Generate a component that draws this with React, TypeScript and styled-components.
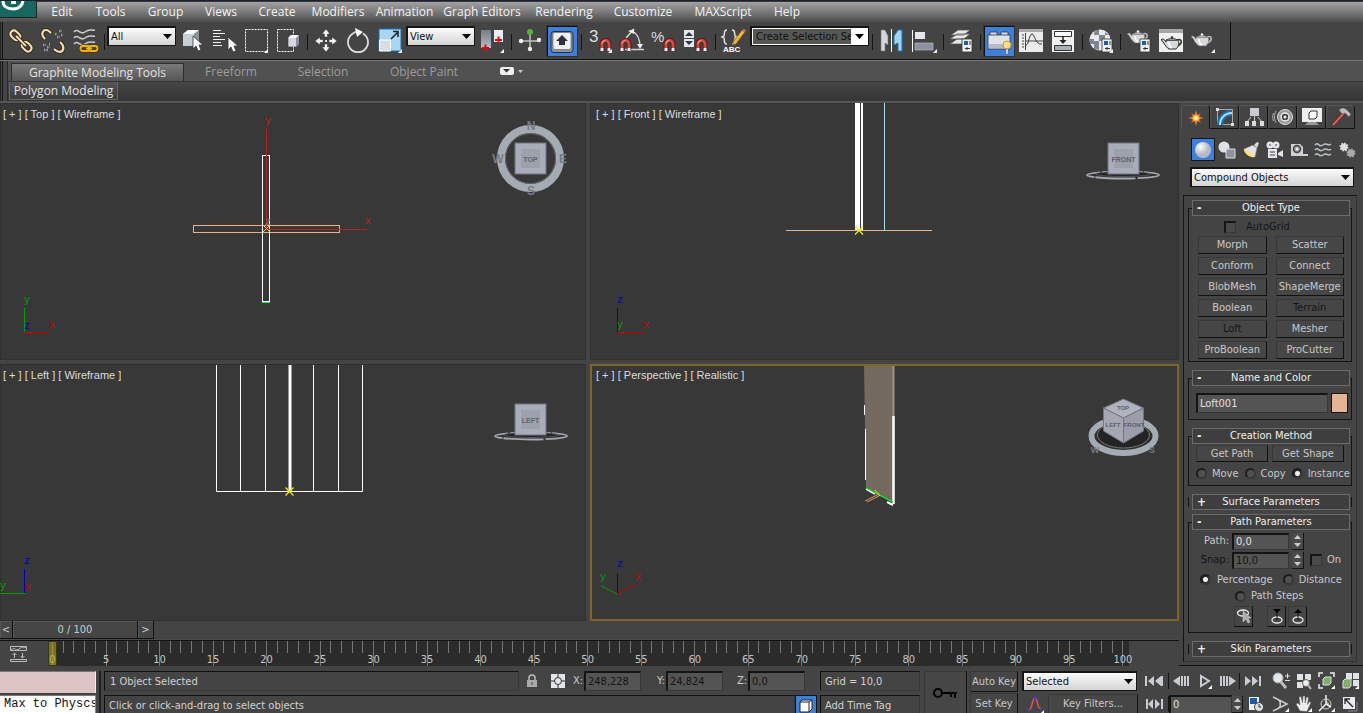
import React from "react";
import styled, { createGlobalStyle, css } from "styled-components";

const UI = `"DejaVu Sans Condensed", "Noto Sans", sans-serif`;
const MENU = `"Open Sans", "Noto Sans", sans-serif`;

const Global = createGlobalStyle`
  * { box-sizing: border-box; }
  html, body { margin: 0; padding: 0; background: #444; }
  body { font: 11px/14px ${UI}; color: #d2d2d2; }
  button, input, select { font: inherit; color: inherit; margin: 0; padding: 0; border-radius: 0; }
  svg { display: block; flex: none; }
`;

const Page = styled.div`
  min-height: 100vh;
  display: flex;
  flex-direction: column;
  overflow: hidden;
  background: #444;
`;

/* ---------- menu bar ---------- */
const MenuBar = styled.nav`
  display: flex;
  height: 22px;
  border-top: 1px solid #17202c;
  background: linear-gradient(#3a3a3a 0 1px, #a2a2a2 1px, #7b7b7b 50%, #4c4c4c);
`;
const Logo = styled.button`
  width: 37px;
  height: 17px;
  margin-right: 3px;
  border: 0;
  border-right: 1px solid #222;
  border-bottom: 1px solid #222;
  background: #17665f;
  overflow: hidden;
`;
const MenuItem = styled.button<{ $w: number }>`
  width: ${(p) => p.$w}px;
  border: 0;
  padding-top: 1px;
  background: none;
  color: #f4f4f4;
  font: 12px/20px ${MENU};
  white-space: nowrap;
  display: flex;
  justify-content: center;
  align-items: center;
`;

/* ---------- main toolbar ---------- */
const ToolRow = styled.div`
  display: flex;
  height: 39px;
  border-bottom: 1px solid #777;
`;
const Toolbar = styled.div`
  display: flex;
  width: 1231px;
  padding: 3px 0 0 5px;
  border-right: 1px solid #111;
  border-bottom: 1px solid #111;
  box-shadow: inset 1px 0 #222, inset 2px 0 #444, inset 3px 0 #111;
`;
const ToolButton = styled.button<{ $on?: boolean; $gap?: number }>`
  width: 32px;
  height: 32px;
  border: 0;
  margin-left: ${(p) => p.$gap ?? 0}px;
  background: none;
  flex: none;
  ${(p) =>
    p.$on &&
    css`
      background: #3d80dc;
      border: solid #111;
      border-width: 1px 0 0 1px;
      outline: 1px solid #333;
      width: 30px;
      height: 30px;
      margin: 1px 1px 0;
      svg {
        margin: -2px;
      }
    `}
`;
const Sep = styled.span<{ $w?: number }>`
  width: ${(p) => p.$w ?? 6}px;
  height: 16px;
  margin-top: 9px;
  flex: none;
  background: linear-gradient(#151515, #151515) center / 1px 100% no-repeat;
`;
const SelectBox = styled.span<{ $w: number; $h: number }>`
  display: grid;
  width: ${(p) => p.$w}px;
  height: ${(p) => p.$h}px;
  border: solid #151515;
  border-width: 2px 1px 1px 2px;
  flex: none;
  align-items: center;
  background: linear-gradient(#fbfbfb, #d4d4d4);
  ${Toolbar} & {
    margin-top: 1px;
  }
  select {
    grid-area: 1/1;
    width: 100%;
    height: 100%;
    appearance: none;
    border: 0;
    background: none;
    color: #111;
    padding: 1px 0 0 2px;
    outline: none;
  }
  svg {
    grid-area: 1/1;
    justify-self: end;
    margin-right: 3px;
    pointer-events: none;
  }
`;
const ComboBox = styled.span`
  display: flex;
  width: 119px;
  height: 20px;
  margin-top: 1px;
  padding: 1px;
  border: solid #151515;
  border-width: 2px 1px 1px 2px;
  background: #fff;
  input {
    width: 98px;
    border: 0;
    padding-left: 3px;
    background: #555753;
    color: #111;
  }
  button {
    flex: 1;
    border: 0;
    background: #fff;
    display: grid;
    place-items: center;
  }
`;

/* ---------- ribbon ---------- */
const RibbonRow = styled.div`
  display: flex;
  padding-left: 7px;
  box-shadow: inset 1px 0 #222, inset 2px 0 #444, inset 3px 0 #151515;
`;
const Ribbon = styled.div`
  flex: 1;
  display: flex;
  flex-direction: column;
  border-left: 1px solid #2a2a2a;
`;
const RibbonTabs = styled.div`
  display: flex;
  align-items: flex-end;
  height: 21px;
  padding-left: 3px;
  background: #515151;
  border-bottom: 1px solid #333;
`;
const RibbonTab = styled.button<{ $w: number; $on?: boolean }>`
  width: ${(p) => p.$w}px;
  height: 18px;
  border: 0;
  background: none;
  color: #9d9d9d;
  font: 12px/18px ${MENU};
  ${(p) =>
    p.$on &&
    css`
      color: #e2e2e2;
      border: solid #2c2c2c;
      border-width: 1px 1px 0;
      background: linear-gradient(#7a7a7a, #555);
    `}
`;
const RibbonPanels = styled.div`
  height: 19px;
  display: flex;
  padding-left: 1px;
  background: linear-gradient(#464646, #353535);
`;
const RibbonPanel = styled.button`
  height: 18px;
  width: 109px;
  border: 1px solid #666;
  border-top: 0;
  background: linear-gradient(#555, #3c3c3c);
  color: #e4e4e4;
  font: 12px/18px ${MENU};
  white-space: nowrap;
  display: flex;
  justify-content: center;
  align-items: center;
`;

/* ---------- workspace ---------- */
const Workspace = styled.div`
  flex: 1;
  display: flex;
  border-top: 2px solid #555;
`;
const Stage = styled.div`
  flex: 1;
  min-width: 0;
  display: flex;
  flex-direction: column;
`;
const Views = styled.div`
  flex: 1;
  display: grid;
  grid-template-columns: 586fr 589fr;
  grid-template-rows: 1fr 1fr;
  gap: 4px;
`;
const View = styled.section<{ $active?: boolean }>`
  position: relative;
  overflow: hidden;
  background: #383838;
  box-shadow: inset 0 0 0 ${(p) => (p.$active ? "2px #7d6627" : "1px #313131")};
`;
const ViewLabel = styled.h2<{ $pad: number }>`
  position: relative;
  margin: 0;
  padding: 3px 0 0 ${(p) => p.$pad}px;
  font: 11px/16px "Liberation Sans", sans-serif;
  color: #dcdcdc;
`;
const Scene = styled.svg`
  position: absolute;
  inset: 0;
  width: 100%;
  height: 100%;
`;

/* ---------- time line ---------- */
const TimeSlider = styled.div`
  display: flex;
  height: 19px;
  border-bottom: 1px solid #4b4b4b;
`;
const SlideButton = styled.button<{ $w: number }>`
  width: ${(p) => p.$w}px;
  height: 18px;
  border: solid #111;
  border-width: 0 1px 1px 0;
  background: #464646;
  color: #ccc;
  box-shadow: inset 1px 1px #555;
`;
const TrackRow = styled.div`
  display: flex;
  height: 26px;
  border-top: 1px solid #111;
`;
const CurveToggle = styled.button`
  width: 48px;
  border: 0;
  background: none;
  padding-left: 10px;
`;
const Ruler = styled.div`
  flex: 1;
  margin-right: 50px;
  display: flex;
  justify-content: space-between;
  padding: 0 5px 0 4px;
  background: #2b2b2b;
  position: relative;
`;
const Tick = styled.span<{ $major: boolean }>`
  width: 1px;
  height: ${(p) => (p.$major ? 25 : 12)}px;
  background: #777;
  display: flex;
  flex-direction: column;
  align-items: center;
  justify-content: flex-end;
  line-height: 12px;
  color: #c4c4c4;
`;
const Playhead = styled.span`
  position: absolute;
  left: 0;
  top: 0;
  width: 9px;
  height: 25px;
  border: 1px solid #3a3714;
  background: rgba(176, 164, 24, 0.6);
`;

/* ---------- command panel ---------- */
const Panel = styled.aside`
  width: 184px;
  padding: 2px 6px 3px 4px;
  border-bottom: 1px solid #111;
  display: flex;
  flex-direction: column;
`;
const PanelTabs = styled.div`
  display: flex;
  margin-left: -2px;
`;
const PanelTab = styled.button<{ $on?: boolean }>`
  width: 29px;
  height: 24px;
  border: 1px solid #555;
  border-right: 1px solid #111;
  border-bottom: ${(p) => (p.$on ? "0" : "1px solid #111")};
  border-radius: 3px 3px 0 0;
  background: #444;
  display: grid;
  place-items: center;
`;
const CategoryRow = styled.div`
  display: flex;
  margin: 9px 0 6px 8px;
`;
const Category = styled.button<{ $on?: boolean }>`
  width: 24px;
  height: 23px;
  border: 1px solid ${(p) => (p.$on ? "#151515" : "transparent")};
  background: ${(p) => (p.$on ? "#3d80dc" : "none")};
  display: grid;
  place-items: center;
`;
const Rollouts = styled.div`
  flex: 1;
  margin-top: 8px;
  width: 174px;
  padding: 4px 4px 0;
  border: 1px solid #333;
  border-left-color: #151515;
  border-top-color: #151515;
`;
const RolloutHead = styled.button`
  position: relative;
  display: flex;
  width: 158px;
  height: 16px;
  margin: 0 4px;
  padding: 0 4px;
  border: 1px solid #6b6b6b;
  background: #3e3e3e;
  color: #eee;
  line-height: 14px;
  b {
    width: 10px;
    text-align: left;
    font-size: 12px;
  }
  span {
    flex: 1;
    padding-right: 10px;
  }
`;
const RolloutBody = styled.div<{ $h: number }>`
  min-height: ${(p) => p.$h}px;
  margin: -8px 0 8px;
  padding: 8px 3px 0 7px;
  border: 1px solid #141414;
`;
const ClosedRollout = styled.section`
  padding: 0;
  margin-bottom: 4px;
  background:
    linear-gradient(#141414, #141414) left center / 1px 10px no-repeat,
    linear-gradient(#141414, #141414) right center / 1px 10px no-repeat;
`;
const PushGrid = styled.div<{ $gap: number; $inset?: number }>`
  display: grid;
  grid-template-columns: 1fr 1fr;
  gap: 3px ${(p) => p.$gap}px;
  padding: 0 4px 0 ${(p) => p.$inset ?? 0}px;
`;
const Push = styled.button<{ $off?: boolean; $h?: number }>`
  height: ${(p) => p.$h ?? 18}px;
  border: 1px solid #383838;
  border-right-color: #111;
  border-bottom-color: #111;
  background: #464646;
  color: ${(p) => (p.$off ? "#161616" : "#c8c8c8")};
  white-space: nowrap;
  display: flex;
  justify-content: center;
  align-items: center;
`;
const Row = styled.div<{ $h: number; $gap?: number; $pad?: number }>`
  display: flex;
  align-items: center;
  height: ${(p) => p.$h}px;
  gap: ${(p) => p.$gap ?? 0}px;
  padding-left: ${(p) => p.$pad ?? 0}px;
`;
const CheckLabel = styled.label<{ $off?: boolean; $gap?: number }>`
  display: flex;
  align-items: center;
  gap: ${(p) => p.$gap ?? 5}px;
  color: ${(p) => (p.$off ? "#161616" : "#c8c8c8")};
  white-space: nowrap;
`;
const Check = styled.input`
  appearance: none;
  width: 12px;
  height: 12px;
  border: 2px solid #151515;
  border-right: 1px solid #383838;
  border-bottom: 1px solid #383838;
  background: #4a4a4a;
`;
const Radio = styled.input`
  appearance: none;
  width: 11px;
  height: 11px;
  flex: none;
  border: 2px solid #1c1c1c;
  border-right-color: #383838;
  border-bottom-color: #383838;
  border-radius: 50%;
  background: #505050;
  &:checked {
    background: radial-gradient(#f0f0f0 0 2px, #333 3px);
  }
`;
const Field = styled.input<{ $w?: number; $h?: number; $off?: boolean }>`
  width: ${(p) => p.$w ?? 57}px;
  height: ${(p) => p.$h ?? 17}px;
  border: 1px solid #383838;
  border-top: 2px solid #141414;
  border-left: 2px solid #141414;
  background: #545454;
  color: ${(p) => (p.$off ? "#141414" : "#e0e0e0")};
  padding-left: 2px;
  outline: none;
  flex: none;
`;
const ParamLabel = styled.label<{ $off?: boolean }>`
  width: 33px;
  text-align: right;
  color: ${(p) => (p.$off ? "#141414" : "#c8c8c8")};
`;
const Swatch = styled.button`
  width: 18px;
  height: 20px;
  border: 1px solid #151515;
  background: #e3b595;
`;
const SpinBox = styled.span`
  display: flex;
  flex-direction: column;
  width: 12px;
  height: 17px;
  background: #4a4a4a;
  border: solid #151515;
  border-width: 0 1px 1px 0;
  button {
    flex: 1;
    border: 0;
    background: none;
    display: grid;
    place-items: center;
    min-height: 0;
  }
`;
const IconPush = styled(Push)<{ $ml?: number }>`
  width: 19px;
  height: 21px;
  margin-left: ${(p) => p.$ml ?? 0}px;
`;

/* ---------- status area ---------- */
const Status = styled.footer`
  display: flex;
  height: 49px;
  padding-top: 5px;
`;
const Listener = styled.div`
  width: 101px;
  border-right: 2px solid #222;
  display: flex;
  flex-direction: column;
  gap: 2px;
`;
const MacroLine = styled.input`
  width: 96px;
  height: 22px;
  border: solid #777;
  border-width: 1px 0 0;
  border-right: 1px solid #eee;
  background: #dcc4c4;
`;
const ScriptLine = styled.input`
  width: 96px;
  height: 20px;
  border: 0;
  border-top: 1px solid #777;
  border-right: 1px solid #888;
  background: #fff;
  color: #111;
  padding: 0 0 3px 4px;
  font: 12px/16px "Liberation Mono", monospace;
`;
const Col = styled.div<{ $w?: number; $ml: number; $gap?: number }>`
  display: flex;
  flex-direction: column;
  gap: ${(p) => p.$gap ?? 4}px;
  margin-left: ${(p) => p.$ml}px;
  ${(p) => (p.$w ? css`width: ${p.$w}px; flex: none;` : css`flex: 1; min-width: 0;`)}
`;
const StatusRow = styled.div`
  display: flex;
  height: 20px;
  align-items: center;
`;
const Readout = styled.div<{ $pad?: number }>`
  flex: 1;
  height: 20px;
  padding-left: ${(p) => p.$pad ?? 4}px;
  border: 1px solid #383838;
  border-top-color: #111;
  border-left-color: #111;
  line-height: 20px;
  white-space: nowrap;
  overflow: hidden;
`;
const AxisGroup = styled.div`
  display: flex;
  gap: 12px;
  margin-right: 12px;
`;
const AxisLabel = styled.label`
  display: flex;
  align-items: center;
  gap: 1px;
  color: #ccc;
  width: 70px;
  justify-content: flex-end;
  input {
    height: 20px;
  }
`;
const BareButton = styled.button<{ $w: number; $on?: boolean }>`
  width: ${(p) => p.$w}px;
  height: 20px;
  border: ${(p) => (p.$on ? "1px solid #151515" : "0")};
  background: ${(p) => (p.$on ? "#3d80dc" : "none")};
  display: grid;
  place-items: center;
  flex: none;
`;
const KeyButton = styled(Push)`
  width: 43px;
  height: 43px;
  margin-left: 4px;
`;
const FilterButton = styled(Push)`
  flex: 1;
`;
const ThinSep = styled.span`
  width: 1px;
  height: 16px;
  background: #151515;
  flex: none;
`;
const NavGrid = styled.div`
  display: grid;
  grid-template-columns: repeat(4, 23px);
  grid-template-rows: 20px 20px;
  gap: 3px 0;
  margin-right: 2px;
`;

/* ---------- icons ---------- */
const Arrow = () => (
  <svg width="9" height="5"><path d="M0 0h9L4.500 5z" fill="#000" /></svg>
);
const T = ({ children }: { children: React.ReactNode }) => (
  <svg width="32" height="32" fill="none">{children}</svg>
);
const Corner = () => <path d="M28 24v4h-4z" fill="#fff" />;
const Cursor = ({ x, y }: { x: number; y: number }) => (
  <path transform={`translate(${x} ${y})`} d="M0 0v13l3-3 2 5 3-1-2-5h4z" fill="#fff" stroke="#333" strokeWidth=".8" />
);
const Magnet = ({ x, y }: { x: number; y: number }) => (
  <g transform={`translate(${x} ${y})`}>
    <path d="M2 11V5a3.500 3.500 0 017 0v6" stroke="#501010" strokeWidth="4.600" />
    <path d="M2 9V5a3.500 3.500 0 017 0v4" stroke="#d84840" strokeWidth="3" />
    <path d="M1.500 5a4 4 0 014-3.500" stroke="#f2a09a" strokeWidth="1" />
    <path d="M.5 9h3v3h-3zM7.500 9h3v3h-3z" fill="#eee" />
  </g>
);
const Teapot = ({ x, y, s = 1, dark }: { x: number; y: number; s?: number; dark?: boolean }) => {
  const line = dark ? "#222" : "#666";
  return (
    <g transform={`translate(${x} ${y}) scale(${s})`}>
      <path d="M16 5c5-2 6 3 1 6" stroke={dark ? "#333" : "#bbb"} strokeWidth="1.500" fill="none" />
      <path d="M5 5h12c2 4 0 7-2 9H8c-2-1-3-3-3-3C3 10 3 6 0 5l1-1c3 0 3 2 4 3z" fill="#d5d8dc" stroke={line} strokeWidth={dark ? 1 : 0.6} />
      <path d="M6 5c1-2 9-2 10 0z" fill="#eee" stroke={line} strokeWidth=".8" />
      <circle cx="11" cy="2.500" r="1.300" fill={dark ? "#333" : "#eee"} />
      <path d="M8 7c0 3 1 5 3 6" stroke="#fff" strokeWidth="1.500" fill="none" />
    </g>
  );
};
const Dialog = ({ x, y }: { x: number; y: number }) => (
  <g transform={`translate(${x} ${y})`}>
    <path d="M0 0h10v13H0z" fill="#eef1f5" stroke="#333" strokeWidth=".8" />
    <path d="M2 2h4v4H2z" fill="#1d5cab" />
    <path d="M8 2v4M3 9.500h5M5 8v3" stroke="#333" />
  </g>
);
const Loop = ({ d, c = "#e8cf9f" }: { d: string; c?: string }) => (
  <>
    <path d={d} stroke="#33291c" strokeWidth="4" />
    <path d={d} stroke={c} strokeWidth="2.200" />
    <path d={d} stroke="#fff3d8" strokeWidth=".7" />
  </>
);
const I = {
  link: (
    <T>
      <g transform="translate(16 16) rotate(45)">
        <Loop d="M-6 -3.500h-4a3.500 3.500 0 000 7h4a3.500 3.500 0 000-7zM6 -3.500h4a3.500 3.500 0 010 7h-4a3.500 3.500 0 010-7z" />
        <Loop d="M-7 0h14" />
      </g>
    </T>
  ),
  unlink: (
    <T>
      <Loop d="M8 14c-5-5-2-9 1-9s3 2 5 3M23 17c5 4 4 9 0 10-3 0-4-1-6-3" />
      <path d="M18 9h2M22 6h3M20 12h3M24 10h2M6 20h3M10 22h3M7 25h4M12 19h1" stroke="#999" strokeWidth="2.500" strokeDasharray="1.500 1" />
    </T>
  ),
  bind: (
    <T>
      <path d="M5 7c4-5 6 4 11 0s6-1 10-2M5 13c4-5 6 4 11 0s6-1 10-2M5 19c4-5 6 4 11 0s6-1 10-2" stroke="#c9ccd0" strokeWidth="1.600" />
      <path d="M14 21h4a2 2 0 010 5h-4a2 2 0 010-5zM22 21h4a2 2 0 010 5h-4a2 2 0 010-5zM17 23.500h6" stroke="#5a3a00" strokeWidth="3.400" />
      <path d="M14 21h4a2 2 0 010 5h-4a2 2 0 010-5zM22 21h4a2 2 0 010 5h-4a2 2 0 010-5zM17 23.500h6" stroke="#f2b21c" strokeWidth="1.800" />
    </T>
  ),
  pick: (
    <T>
      <path d="M7 9l5-4h11v12l-4 4H7z" fill="#c9cdd5" /><path d="M7 9l5-4h11l-5 4z" fill="#fff" /><path d="M18 9l5-4v12l-5 4z" fill="#8c929e" />
      <Cursor x={17} y={11} />
    </T>
  ),
  list: (
    <T>
      <path d="M5 5.500h8M5 8.500h12M5 11.500h7M5 14.500h12M5 17.500h8M5 20.500h9" stroke="#eee" />
      <Cursor x={20} y={12} />
    </T>
  ),
  rect: <T><path d="M5.500 4.500h22v22h-22z" stroke="#fff" strokeDasharray="2 1" /><Corner /></T>,
  cross: (
    <T>
      <path d="M5.500 4.500h16v22h-16z" stroke="#fff" strokeDasharray="2 1" />
      <path d="M16 13l3-3h8v9l-3 3h-8z" fill="#d4d7dd" stroke="#333" strokeWidth=".6" /><path d="M16 13l3-3h8l-3 3z" fill="#fff" /><path d="M24 13l3-3v9l-3 3z" fill="#8a909c" />
    </T>
  ),
  move: (
    <T>
      <path d="M16 4l4 5h-2.500v3h-3V9H12zM16 27l4-5h-2.500v-3h-3v3H12zM5 16l5-4v2.500h3v3h-3V20zM27 16l-5-4v2.500h-3v3h3V20z" fill="#f4f4f4" stroke="#333" strokeWidth=".5" />
      <path d="M15 15h2v2h-2z" fill="#ddd" />
    </T>
  ),
  rotate: <T><path d="M11 8.500a10 10 0 1010 0" stroke="#ddd" strokeWidth="1.800" /><path d="M11 8.500a10 10 0 014-2" stroke="#ddd" strokeWidth="1.800" /><path d="M13 3l8 4-6 5z" fill="#fff" /></T>,
  scale: (
    <T>
      <path d="M5 4h22v22H5z" fill="#a9d7ef" stroke="#1671bd" /><path d="M5.500 15h11v11h-11z" fill="#dadde3" stroke="#fff" />
      <path d="M17 14l7-7M24 12V6.500h-5" stroke="#222" strokeWidth="1.500" /><Corner />
    </T>
  ),
  pivot: (
    <T>
      <defs><linearGradient id="pv" x2="0" y2="1"><stop stopColor="#747b8a" /><stop offset="1" stopColor="#b8bcc6" /></linearGradient></defs>
      <path d="M5 5h10v18H5z" fill="url(#pv)" /><path d="M18 5h9v12h-9z" fill="#eceef1" />
      <path d="M9.500 19.500v7M6 23h7M22.500 11.500v7M19 15h7" stroke="#d01010" strokeWidth="2" /><Corner />
    </T>
  ),
  manip: (
    <T>
      <path d="M16 8v16M7 16h18" stroke="#bfc3c9" strokeWidth="1.500" />
      <circle cx="16" cy="7" r="3" fill="#55b52e" /><circle cx="7" cy="16" r="2.200" fill="#eee" /><circle cx="25" cy="15" r="2.200" fill="#eee" /><circle cx="16" cy="24" r="2.200" fill="#eee" />
    </T>
  ),
  keyb: (
    <T>
      <rect x="5" y="5.500" width="22" height="21" rx="3" fill="#8d93a0" stroke="#272f3d" /><rect x="7" y="6.500" width="18" height="17" rx="2" fill="#f0f2f6" stroke="#555" strokeWidth=".6" />
      <path d="M16 9l6 6h-3v4h-6v-4h-3z" fill="#2c323e" />
    </T>
  ),
  snap3: <T><text x="5" y="17" fill="#ddd" fontFamily="Liberation Sans" fontSize="17">3</text><Magnet x={16} y={14} /><Corner /></T>,
  angle: (
    <T>
      <path d="M10 13l8-9M9 24.500h19M14 6c7 1 10 8 10 16" stroke="#d4d4d4" strokeWidth="1.500" /><path d="M12 6l6-2v5zM21 19h6l-3 5z" fill="#eee" />
      <Magnet x={4} y={14} />
    </T>
  ),
  pct: <T><text x="3" y="17" fill="#ddd" fontFamily="Liberation Sans" fontSize="15">%</text><Magnet x={16} y={14} /></T>,
  spin: (
    <T>
      <path d="M4 5h10v8H4zM4 14h10v8H4z" fill="#e4e7ec" /><path d="M9 7l4 4H5zM9 20l4-4H5z" fill="#333a46" /><Magnet x={16} y={14} />
    </T>
  ),
  abc: (
    <T>
      <path d="M9 5c-4 0-2 4-3 6l-2 1 2 1c1 2-1 6 3 6M14 5c4 0 2 4 3 6l2 1-2 1c-1 2 1 6-3 6" stroke="#ddd" strokeWidth="1.500" />
      <path d="M24 5l3 2-9 12-3 1 0-3z" fill="#f2b43a" stroke="#6b4710" strokeWidth=".6" /><path d="M24 5l2-1 2 2-1 1z" fill="#e66" />
      <text x="5" y="27" fill="#fff" fontFamily="Liberation Sans" fontWeight="bold" fontSize="8">ABC</text>
    </T>
  ),
  mirror: (
    <T>
      <path d="M6 5h4l3 6v9l-3-2v8H6z" fill="#d3d6dc" stroke="#777" strokeWidth=".6" /><path d="M16.500 4v23" stroke="#fff" /><path d="M27 5h-4l-4 6v9l4-2v8h4z" fill="#9ed4f0" stroke="#1976bd" />
    </T>
  ),
  align: <T><path d="M3.500 5v22" stroke="#fff" /><path d="M6 7h10v7H6z" fill="#e4e6ea" /><path d="M6 18h18v7H6z" fill="#8b91a0" stroke="#c5c8d0" strokeWidth=".6" /><Corner /></T>,
  layers: (
    <T>
      <path d="M5 19l7-5h13l-6 5zM5 14l7-5h13l-6 5zM6 10l7-5h12l-6 5z" fill="#e5e7ea" stroke="#555" strokeWidth=".8" /><Dialog x={17} y={14} />
    </T>
  ),
  graphite: (
    <T>
      <path d="M7 6h7v4H7zM18 6h7v4h-7z" fill="#d9dce2" stroke="#2b3646" strokeWidth=".8" /><path d="M5 9h22v14H5z" fill="#dfe2e8" stroke="#2b3646" strokeWidth=".8" />
      <path d="M6 18h20v4H6z" fill="#b6bac4" /><circle cx="24" cy="19" r="4" fill="#ffe08a" stroke="#e09020" /><path d="M23 23h2v5h-2z" fill="#eee" stroke="#555" strokeWidth=".4" />
    </T>
  ),
  curve: (
    <T>
      <path d="M4 4h24v23H4z" fill="#ececec" /><path d="M4 4h24v3H4z" fill="#aaa" /><path d="M10.500 8v17M7 10h2M7 13h2M7 16h2M7 19h2M7 22h2M11 16h17" stroke="#444" strokeWidth="1" />
      <path d="M11 20c3 0 3-11 6-11s3 11 10 10" stroke="#333" />
    </T>
  ),
  schem: (
    <T>
      <path d="M5 5h22v22H5z" fill="#f1f1f1" /><path d="M7.500 6.500h17v5h-17zM7.500 20.500h17v5h-17z" fill="#a9aeba" stroke="#333" /><path d="M8 7h16v4H8z" fill="#fff" /><path d="M16 11v5" stroke="#222" strokeWidth="1.500" /><path d="M12.500 15h7L16 19z" fill="#222" />
    </T>
  ),
  material: (
    <T>
      <circle cx="15" cy="15" r="10.500" fill="#e8eaee" /><path d="M10 5h4v5h-5v6h5v-6h6v6h-6v6h6v-6h5v3l-5 6v-3h-6v3l-5-1v-5H5v-5h4v-5zM20 7l4 3h-4z" fill="#7d8590" />
      <Dialog x={17} y={14} /><Corner />
    </T>
  ),
  rsetup: <T><Teapot x={4} y={4} /><Dialog x={17} y={14} /></T>,
  rframe: <T><path d="M4 4h24v23H4z" fill="#f0f0f0" /><path d="M4 4h24v4H4z" fill="#a6a6a6" /><Teapot x={6} y={10} dark /></T>,
  render: <T><Teapot x={4} y={7} /><Corner /></T>,
};

/* ---------- viewport drawings ---------- */
const Cube = ({ x, y, label }: { x: number; y: number; label: string }) => (
  <g>
    <rect x={x} y={y} width="31" height="31" fill="#a9adb9" stroke="#6f7580" />
    <rect x={x + 6} y={y + 6} width="19" height="19" fill="#9da1ac" />
    <text x={x + 15.5} y={y + 18.500} textAnchor="middle" fontFamily="Liberation Sans" fontWeight="bold" fontSize="7" fill="#5d626d">{label}</text>
  </g>
);
const FlatRing = ({ x, y }: { x: number; y: number }) => (
  <>
    <ellipse cx={x} cy={y} rx="36" ry="3.500" fill="#2f2f2f" stroke="#a4a9b2" strokeWidth="1.800" strokeDasharray="22 2 40 1" />
    <ellipse cx={x} cy={y - 1} rx="27" ry="2.500" fill="#252525" stroke="#666" strokeWidth=".7" />
  </>
);
const G = ({ x, y, c, children }: { x: number; y: number; c: string; children: string }) => (
  <text x={x} y={y} fill={c} fontFamily="Liberation Sans" fontSize="11" textAnchor="middle">{children}</text>
);
const Pivot = ({ x, y }: { x: number; y: number }) => <path d={`M${x - 4} ${y - 4}l8 8m-8 0l8-8`} stroke="#f4f000" strokeWidth="1.200" />;
const RED = "#c80000", GREEN = "#0a9a0a", BLUE = "#0000c0";

const TopScene = () => (
  <Scene fill="none" shapeRendering="crispEdges">
    <path d="M193.500 122.500h146v7h-146z" stroke="#eab488" />
    <path d="M262.500 52.500h7v146h-7z" stroke="#fff" />
    <path d="M262 199.500h8" stroke="#00ff20" />
    <path d="M266.500 26v100.500M266.500 126.500h100" stroke="#b92020" />
    <path d="M263 122l7 7m-7 0l7-7" stroke="#e6e000" />
    <G x={268} y={21} c="#c02020">y</G><G x={368} y={121} c="#c02020">x</G><G x={268} y={122} c="#777">z</G>
    <path d="M24.500 205v25" stroke={GREEN} /><path d="M24 229.500h26" stroke={RED} />
    <G x={27} y={200} c={GREEN}>y</G><G x={52} y={225} c={RED}>x</G><G x={27} y={226} c={BLUE}>z</G>
    <g shapeRendering="auto">
      <circle cx="530.500" cy="55.500" r="29.500" stroke="#a5abb3" strokeWidth="8" /><circle cx="530.500" cy="55.500" r="25" stroke="#666b70" />
      <Cube x={515} y={40} label="TOP" />
      <g fill="#747b88" fontFamily="Liberation Sans" fontWeight="bold" fontSize="12" textAnchor="middle">
        <text x="531" y="27">N</text><text x="531" y="92">S</text><text x="498" y="60">W</text><text x="563" y="60">E</text>
      </g>
    </g>
  </Scene>
);
const FrontScene = () => (
  <Scene fill="none">
    <path d="M265 0h5v127h-5zM271 0h2v127h-2z" fill="#fff" /><path d="M294.500 0v127" stroke="#a9dfe6" /><path d="M196 127.500h146" stroke="#eab488" />
    <Pivot x={269} y={127.500} />
    <path d="M27.500 205v25" stroke={BLUE} /><path d="M27 229.500h26" stroke={RED} />
    <G x={30} y={200} c={BLUE}>z</G><G x={30} y={225} c={GREEN}>y</G><G x={56} y={225} c={RED}>x</G>
    <FlatRing x={533} y={72} /><Cube x={518} y={40} label="FRONT" />
  </Scene>
);
const LeftScene = () => (
  <Scene fill="none">
    <path d="M216.500 1v126.500h146V1M240.500 1v126M265.500 1v126M313.500 1v126M338.500 1v126" stroke="#fff" /><path d="M290 1v126" stroke="#fff" strokeWidth="3" />
    <Pivot x={289.500} y={127.500} />
    <path d="M24.500 205v25" stroke={BLUE} /><path d="M0 229.500h25" stroke={GREEN} />
    <G x={27} y={200} c={BLUE}>z</G><G x={3} y={225} c={GREEN}>y</G><G x={28} y={226} c={RED}>x</G>
    <FlatRing x={531} y={72} /><Cube x={515} y={40} label="LEFT" />
  </Scene>
);
const PerspScene = () => (
  <Scene fill="none">
    <path d="M274 2h29v137l-27-14z" fill="#746a60" /><path d="M303.500 2v50" stroke="#a3948a" strokeWidth="2" />
    <path d="M303.500 52v88" stroke="#fff" strokeWidth="2.500" /><path d="M274.500 41v10M275.500 65v51" stroke="#fff" /><path d="M276 125l9 5M297 138l6 3" stroke="#fff" strokeWidth="2" />
    <path d="M276 124l27 14" stroke="#00f020" strokeWidth="1.300" /><path d="M275 137l14-7M277 138l12-6" stroke="#dc965a" />
    <path d="M285 126l5 6" stroke="#e6e000" />
    <path d="M27.500 209v21" stroke={BLUE} /><path d="M27 230l18-9" stroke={RED} /><path d="M27 230l-16-8" stroke={GREEN} />
    <G x={30} y={203} c={BLUE}>z</G><G x={13} y={216} c={GREEN}>y</G><G x={48} y={216} c={RED}>x</G>
    <g fill="#747b88" fontFamily="Liberation Sans" fontWeight="bold" fontSize="9" textAnchor="middle">
      <ellipse cx="533.500" cy="72" rx="32" ry="17" stroke="#a5abb3" strokeWidth="6" fill="#2e2e2e" />
      <ellipse cx="533.500" cy="71" rx="26" ry="13" stroke="#777" fill="#242424" />
      <text x="505" y="89">W</text><text x="562" y="89">S</text>
    </g>
    <path d="M533.500 35l20 9-20 10-20-10z" fill="#b0b3be" stroke="#70757f" /><path d="M513.500 44l20 10v25l-20-12z" fill="#a5a8b3" stroke="#70757f" /><path d="M553.500 44l-20 10v25l20-12z" fill="#9b9eaa" stroke="#70757f" />
    <g fill="#5d626d" fontFamily="Liberation Sans" fontWeight="bold" fontSize="6" textAnchor="middle">
      <text x="523" y="63">LEFT</text><text x="544" y="63">FRONT</text><text x="533" y="46">TOP</text>
    </g>
  </Scene>
);

/* ---------- panel icons ---------- */
const S = ({ children, w = 22, h = 20 }: { children: React.ReactNode; w?: number; h?: number }) => (
  <svg width={w} height={h} viewBox={`0 0 ${w} ${h}`} fill="none">{children}</svg>
);
const panelTabs: [string, React.ReactNode][] = [
  ["Create", <S><path d="M11 2l1.500 5L16 5l-2 3.500 5 1.500-5 1.500 2 3.500-3.500-2L11 18l-1.500-5L6 15l2-3.500L3 10l5-1.500L6 5l3.500 2z" fill="#e07030" /><circle cx="11" cy="10" r="3.500" fill="#ffb020" /><circle cx="11" cy="10" r="2" fill="#fff6b0" /></S>],
  ["Modify", <S><path d="M3.500 2.500h15v15h-15z" stroke="#aaa" /><path d="M6 18C6 11 11 6 18 6" stroke="#1670b8" strokeWidth="6" /><path d="M6 18C6 11 11 6 18 6" stroke="#b7e0f7" strokeWidth="2" /><path d="M2 1h3v3H2zM17 16h3v3h-3z" fill="#ddd" /></S>],
  ["Hierarchy", <S><path d="M7 1h9v8H7z" fill="#c9ccd2" /><path d="M11.500 9v5M8 10l-4 5M15 10l4 5" stroke="#ccc" /><path d="M2 14h4v5H2zM9 14h4v5H9zM17 14h4v5h-4z" fill="#ddd" /></S>],
  ["Motion", <S><circle cx="13" cy="10" r="7.500" fill="#999" stroke="#ddd" /><circle cx="13" cy="10" r="4" fill="#444" stroke="#eee" strokeWidth="1.500" /><circle cx="13" cy="10" r="1.500" fill="#eee" /><path d="M4 4c-2 4-2 8 0 12M1.500 6c-1 3-1 5 0 8" stroke="#aaa" /></S>],
  ["Display", <S><path d="M1 1h20v14H1z" fill="#eee" /><path d="M4 18h14l-3-3H7z" fill="#999" /><path d="M8 6l2-2h6v6l-2 2H8z" fill="#fff" stroke="#333" /></S>],
  ["Utilities", <S><path d="M3 18L14 6" stroke="#6a2020" strokeWidth="4" /><path d="M3 18L14 6" stroke="#c86a5a" strokeWidth="2" /><path d="M9 3c3-3 6-2 8 0l4 4-2 3-4-4-3 1z" fill="#b9bcc2" stroke="#555" strokeWidth=".6" /></S>],
];
const categories: [string, React.ReactNode][] = [
  ["Geometry", <S><radialGradient id="sp" cx=".35" cy=".3"><stop stopColor="#fff" /><stop offset="1" stopColor="#b5b9c2" /></radialGradient><circle cx="11" cy="10" r="8" fill="url(#sp)" /></S>],
  ["Shapes", <S><circle cx="8" cy="7" r="5.500" fill="#dfe1e5" /><path d="M10 9h9v9h-9z" fill="#8d929e" stroke="#ddd" /></S>],
  ["Lights", <S><path d="M13 5l4 3-2 9C9 17 4 12 4 9z" fill="#e2e4e8" stroke="#777" strokeWidth=".6" /><path d="M4 9c3 1 9 5 11 8-5 1-11-3-11-8z" fill="#ffe17a" /><path d="M14 5l3-3 2 1-2 5z" fill="#d5d8dc" /></S>],
  ["Cameras", <S><circle cx="6" cy="5" r="3.500" fill="#e3e5e9" /><circle cx="12" cy="5" r="3.500" fill="#e3e5e9" /><path d="M4 9h9v9H4zM14 13l5-3v7l-5-2z" fill="#e3e5e9" /><path d="M5 5h2M11 5h2M6 12h5M6 15h5" stroke="#444" /></S>],
  ["Helpers", <S><path d="M3 4h9l3 3v7h5v2H3z" fill="#cfd2d8" /><circle cx="9" cy="9" r="3.500" fill="#999" stroke="#444" strokeWidth="1.500" /><circle cx="9" cy="9" r="1.500" fill="#eee" /></S>],
  ["Space Warps", <S><path d="M3 5c3-4 4 3 8 0s5 2 8-1M3 10c3-4 4 3 8 0s5 2 8-1M3 15c3-4 4 3 8 0s5 2 8-1" stroke="#b9c4c6" strokeWidth="1.500" /></S>],
  ["Systems", <S><circle cx="8" cy="7" r="3.500" fill="#ddd" stroke="#ddd" strokeWidth="2" strokeDasharray="1.500 1.200" /><circle cx="15" cy="13" r="3.500" fill="#aaa" stroke="#aaa" strokeWidth="2" strokeDasharray="1.500 1.200" /></S>],
];

const menus: [string, number][] = [
  ["Edit", 44], ["Tools", 53], ["Group", 57], ["Views", 54], ["Create", 58], ["Modifiers", 64], ["Animation", 69],
  ["Graph Editors", 86], ["Rendering", 78], ["Customize", 80], ["MAXScript", 80], ["Help", 48],
];
const objectTypes: [string, boolean?][] = [
  ["Morph"], ["Scatter"], ["Conform"], ["Connect"], ["BlobMesh"], ["ShapeMerge"],
  ["Boolean"], ["Terrain", true], ["Loft", true], ["Mesher"], ["ProBoolean"], ["ProCutter"],
];

const Tool = ({ icon, label, on, gap }: { icon: keyof typeof I; label: string; on?: boolean; gap?: number }) => (
  <ToolButton aria-label={label} $on={on} $gap={gap}>{I[icon]}</ToolButton>
);
const Select = ({ value, label, w, h = 20 }: { value: string; label: string; w: number; h?: number }) => (
  <SelectBox $w={w} $h={h}>
    <select aria-label={label} defaultValue={value}><option>{value}</option></select>
    <Arrow />
  </SelectBox>
);
const Spinner = ({ label }: { label: string }) => (
  <SpinBox>
    <button aria-label={`${label} up`}><svg width="7" height="4"><path d="M0 4h7L3.500 0z" fill="#ccc" /></svg></button>
    <button aria-label={`${label} down`}><svg width="7" height="4"><path d="M0 0h7L3.500 4z" fill="#ccc" /></svg></button>
  </SpinBox>
);
const Rollout = ({ title, h, children }: { title: string; h?: number; children?: React.ReactNode }) =>
  children ? (
    <section>
      <RolloutHead aria-expanded="true"><b>-</b><span>{title}</span></RolloutHead>
      <RolloutBody $h={h ?? 0}>{children}</RolloutBody>
    </section>
  ) : (
    <ClosedRollout>
      <RolloutHead aria-expanded="false"><b>+</b><span>{title}</span></RolloutHead>
    </ClosedRollout>
  );
const Ring = ({ dir }: { dir?: "up" | "down" }) => (
  <svg width="16" height="18" fill="none">
    {dir ? (
      <>
        <ellipse cx="8" cy="13" rx="5" ry="3" stroke="#eee" strokeWidth="1.300" /><path d="M8 3v10" stroke="#111" />
        <path d={dir === "down" ? "M4 2h8L8 6z" : "M4 6h8L8 2z"} fill="#000" />
      </>
    ) : (
      <>
        <ellipse cx="7" cy="6" rx="5.500" ry="3" stroke="#eee" strokeWidth="1.300" /><path d="M7 4v11l3-3 2 4 2-1-2-4h3z" fill="#aaa" stroke="#ddd" strokeWidth=".5" />
      </>
    )}
  </svg>
);
const play = "#c8ccd3";

export default function App() {
  return (
    <Page>
      <Global />
      <MenuBar>
        <Logo aria-label="Application menu">
          <svg width="36" height="16" fill="none"><path d="M3 0c0 5 4 8 10 8s10-4 10-9" stroke="#fff" strokeWidth="3" /><path d="M11 0h5v3h-5z" fill="#fff" /></svg>
        </Logo>
        {menus.map(([t, w]) => <MenuItem key={t} $w={w}>{t}</MenuItem>)}
      </MenuBar>

      <ToolRow>
        <Toolbar>
          <Tool icon="link" label="Select and Link" /><Tool icon="unlink" label="Unlink" /><Tool icon="bind" label="Bind to Space Warp" />
          <Sep />
          <Select value="All" label="Selection filter" w={69} />
          <Tool icon="pick" label="Select Object" /><Tool icon="list" label="Select by Name" /><Tool icon="rect" label="Selection Region" /><Tool icon="cross" label="Window/Crossing" />
          <Sep />
          <Tool icon="move" label="Move" /><Tool icon="rotate" label="Rotate" /><Tool icon="scale" label="Scale" />
          <Select value="View" label="Reference system" w={69} />
          <Tool icon="pivot" label="Pivot center" gap={1} />
          <Sep />
          <Tool icon="manip" label="Manipulate" /><Tool icon="keyb" label="Keyboard override" on />
          <Sep />
          <Tool icon="snap3" label="Snaps" /><Tool icon="angle" label="Angle snap" /><Tool icon="pct" label="Percent snap" /><Tool icon="spin" label="Spinner snap" />
          <Sep />
          <Tool icon="abc" label="Edit selection sets" />
          <ComboBox>
            <input aria-label="Named selection set" defaultValue="Create Selection Set" />
            <button aria-label="Open selection sets"><Arrow /></button>
          </ComboBox>
          <Sep />
          <Tool icon="mirror" label="Mirror" /><Tool icon="align" label="Align" gap={2} />
          <Sep $w={4} />
          <Tool icon="layers" label="Layers" />
          <Sep />
          <Tool icon="graphite" label="Graphite tools" on /><Tool icon="curve" label="Curve Editor" /><Tool icon="schem" label="Schematic View" />
          <Sep />
          <Tool icon="material" label="Material Editor" />
          <Sep />
          <Tool icon="rsetup" label="Render Setup" /><Tool icon="rframe" label="Rendered Frame" /><Tool icon="render" label="Render" />
        </Toolbar>
      </ToolRow>

      <RibbonRow>
        <Ribbon>
          <RibbonTabs>
            <RibbonTab $w={173} $on>Graphite Modeling Tools</RibbonTab>
            <RibbonTab $w={94}>Freeform</RibbonTab>
            <RibbonTab $w={90}>Selection</RibbonTab>
            <RibbonTab $w={112}>Object Paint</RibbonTab>
            <RibbonTab $w={66} aria-label="Minimize ribbon">
              <svg width="66" height="16"><rect x="20" y="3" width="14" height="8" rx="2" fill="#eceef2" /><path d="M23 5h7l-3.500 3.500z" fill="#333" /><path d="M38 6h5l-2.500 3z" fill="#ccc" /></svg>
            </RibbonTab>
          </RibbonTabs>
          <RibbonPanels><RibbonPanel>Polygon Modeling</RibbonPanel></RibbonPanels>
        </Ribbon>
      </RibbonRow>

      <Workspace>
        <Stage>
          <Views>
            <View><TopScene /><ViewLabel $pad={3}>[ + ] [ Top ] [ Wireframe ]</ViewLabel></View>
            <View><FrontScene /><ViewLabel $pad={6}>[ + ] [ Front ] [ Wireframe ]</ViewLabel></View>
            <View><LeftScene /><ViewLabel $pad={3}>[ + ] [ Left ] [ Wireframe ]</ViewLabel></View>
            <View $active><PerspScene /><ViewLabel $pad={6}>[ + ] [ Perspective ] [ Realistic ]</ViewLabel></View>
          </Views>
          <TimeSlider>
            <SlideButton $w={13}>&lt;</SlideButton>
            <SlideButton $w={125}>0 / 100</SlideButton>
            <SlideButton $w={16}>&gt;</SlideButton>
          </TimeSlider>
          <TrackRow>
            <CurveToggle aria-label="Open mini curve editor">
              <svg width="18" height="18" fill="none" stroke="#bbb"><path d="M.5 1.500h16v4H.5zM1 5c4-4 5 2 8-1s4 0 7-2M.5 14.500h16v2H.5zM4.500 13V8M2.500 10l2-2 2 2M12.500 8v5M10.500 11l2 2 2-2" /></svg>
            </CurveToggle>
            <Ruler>
              {Array.from({ length: 101 }, (_, i) => (
                <Tick key={i} $major={i % 5 === 0}>{i % 5 === 0 && <span>{i}</span>}</Tick>
              ))}
              <Playhead />
            </Ruler>
          </TrackRow>
        </Stage>

        <Panel>
          <PanelTabs>
            {panelTabs.map(([n, ic], i) => <PanelTab key={n} aria-label={n} $on={i === 0}>{ic}</PanelTab>)}
          </PanelTabs>
          <CategoryRow>
            {categories.map(([n, ic], i) => <Category key={n} aria-label={n} $on={i === 0}>{ic}</Category>)}
          </CategoryRow>
          <Row $h={20} $pad={7}><Select value="Compound Objects" label="Object category" w={164} /></Row>
          <Rollouts>
            <Rollout title="Object Type" h={154}>
              <Row $h={19} $pad={28}><CheckLabel $off $gap={10}><Check type="checkbox" disabled />AutoGrid</CheckLabel></Row>
              <PushGrid $gap={9} $inset={2}>
                {objectTypes.map(([n, off]) => <Push key={n} $off={off}>{n}</Push>)}
              </PushGrid>
            </Rollout>
            <Rollout title="Name and Color" h={42}>
              <Row $h={32} $gap={3}><Field aria-label="Object name" $w={132} $h={20} defaultValue="Loft001" /><Swatch aria-label="Object color" /></Row>
            </Rollout>
            <Rollout title="Creation Method" h={49}>
              <PushGrid $gap={4}><Push $h={17}>Get Path</Push><Push $h={17}>Get Shape</Push></PushGrid>
              <Row $h={23} $gap={6}>
                <CheckLabel><Radio type="radio" name="method" />Move</CheckLabel>
                <CheckLabel><Radio type="radio" name="method" />Copy</CheckLabel>
                <CheckLabel><Radio type="radio" name="method" defaultChecked />Instance</CheckLabel>
              </Row>
            </Rollout>
            <Rollout title="Surface Parameters" />
            <Rollout title="Path Parameters" h={111}>
              <Row $h={20} $gap={3}><ParamLabel htmlFor="path">Path:</ParamLabel><Field id="path" defaultValue="0,0" /><Spinner label="Path" /></Row>
              <Row $h={18} $gap={3}>
                <ParamLabel $off htmlFor="snap">Snap:</ParamLabel><Field id="snap" $off defaultValue="10,0" /><Spinner label="Snap" />
                <Row $h={18} $pad={3}><CheckLabel><Check type="checkbox" />On</CheckLabel></Row>
              </Row>
              <Row $h={21} $gap={10} $pad={4}>
                <CheckLabel $gap={6}><Radio type="radio" name="unit" defaultChecked />Percentage</CheckLabel>
                <CheckLabel><Radio type="radio" name="unit" />Distance</CheckLabel>
              </Row>
              <Row $h={12} $pad={39}><CheckLabel><Radio type="radio" name="unit" />Path Steps</CheckLabel></Row>
              <Row $h={28} $pad={38}>
                <IconPush aria-label="Pick shape"><Ring /></IconPush><IconPush aria-label="Previous shape" $ml={14}><Ring dir="down" /></IconPush><IconPush aria-label="Next shape" $ml={2}><Ring dir="up" /></IconPush>
              </Row>
            </Rollout>
            <Rollout title="Skin Parameters" />
          </Rollouts>
        </Panel>
      </Workspace>

      <Status>
        <Listener>
          <MacroLine aria-label="Macro recorder" />
          <ScriptLine aria-label="Script listener" defaultValue="Max to Physcs" />
        </Listener>
        <Col $ml={3}>
          <StatusRow>
            <Readout $pad={5}>1 Object Selected</Readout>
            <BareButton $w={26} aria-label="Lock selection"><svg width="12" height="14" fill="none"><path d="M3 6V4a3 3 0 016 0v2" stroke="#bbb" strokeWidth="1.500" /><path d="M1 6h10v7H1z" fill="#aaa" /><path d="M6 8v3" stroke="#444" /></svg></BareButton>
            <BareButton $w={26} aria-label="Transform type-in"><svg width="14" height="14" fill="none"><path d="M0 0h14v14H0z" fill="#e2e5ea" /><path d="M7 0v14M0 7h14" stroke="#333" /><circle cx="7" cy="7" r="3.500" fill="#e2e5ea" stroke="#333" /></svg></BareButton>
            <AxisGroup>
              <AxisLabel>X:<Field $off defaultValue="248,228" /></AxisLabel>
              <AxisLabel>Y:<Field $off defaultValue="24,824" /></AxisLabel>
              <AxisLabel>Z:<Field $off defaultValue="0,0" /></AxisLabel>
            </AxisGroup>
          </StatusRow>
          <StatusRow>
            <Readout>Click or click-and-drag to select objects</Readout>
            <BareButton $w={22} $on aria-label="Isolate selection"><svg width="16" height="15"><path d="M2 4l2-2h10v9l-3 3H2z" fill="#fff" stroke="#222" /><path d="M2 4h9v10M11 4l3-2" fill="none" stroke="#222" /></svg></BareButton>
          </StatusRow>
        </Col>
        <Col $w={100} $ml={3}>
          <StatusRow><Readout>Grid = 10,0</Readout></StatusRow>
          <StatusRow><Readout>Add Time Tag</Readout></StatusRow>
        </Col>
        <KeyButton aria-label="Set keys">
          <svg width="26" height="12" fill="none" stroke="#000" strokeWidth="2"><circle cx="5" cy="6" r="4" /><path d="M9 6h15M18 6v4M22 6v5" /></svg>
        </KeyButton>
        <Col $w={48} $ml={3} $gap={1}>
          <Push $h={21}>Auto Key</Push>
          <Push $h={21}>Set Key</Push>
        </Col>
        <Col $w={116} $ml={4} $gap={3}>
          <Select value="Selected" label="Key set" w={115} />
          <StatusRow>
            <BareButton $w={26} aria-label="New key tangents"><svg width="20" height="19" fill="none"><path d="M3 15c4 2 4-12 7-12s2 12 6 10" stroke="#e05050" strokeWidth="1.500" /><path d="M2 15h3M9 3h3M15 14h2" stroke="#4040d0" strokeWidth="2" /><path d="M19 15v4h-4z" fill="#fff" /></svg></BareButton>
            <FilterButton $h={20}>Key Filters...</FilterButton>
          </StatusRow>
        </Col>
        <Col $w={129} $ml={2} $gap={3}>
          <StatusRow>
            <BareButton $w={28} aria-label="Go to start"><svg width="18" height="12" fill={play}><path d="M0 1h2v10H0zM9 1v10L3 6zM16 1v10l-6-5zM16 1h2v10h-2z" /></svg></BareButton>
            <ThinSep />
            <BareButton $w={24} aria-label="Previous frame"><svg width="17" height="12" fill={play}><path d="M7 1v10L0 6zM8 1h2v10H8zM11 1h2v10h-2zM14 1h2v10h-2z" /></svg></BareButton>
            <BareButton $w={24} aria-label="Play"><svg width="16" height="16" fill="none"><path d="M4 3v10l8-5z" stroke={play} strokeWidth="2" /><path d="M15 12v4h-4z" fill="#fff" /></svg></BareButton>
            <BareButton $w={22} aria-label="Next frame"><svg width="17" height="12" fill={play}><path d="M0 1h2v10H0zM3 1h2v10H3zM6 1h2v10H6zM9 1v10l7-5z" /></svg></BareButton>
            <ThinSep />
            <BareButton $w={26} aria-label="Go to end"><svg width="17" height="12" fill={play}><path d="M0 1v10l6-5zM7 1v10l6-5zM14 1h2v10h-2z" /></svg></BareButton>
          </StatusRow>
          <StatusRow>
            <BareButton $w={28} aria-label="Key mode"><svg width="17" height="12" fill={play}><path d="M0 1h2v10H0zM7 1v10L2 6zM9 1v10l5-5zM15 1h2v10h-2z" /></svg></BareButton>
            <ThinSep />
            <Field aria-label="Current frame" $w={63} $h={19} defaultValue="0" />
            <Spinner label="Frame" />
            <BareButton $w={26} aria-label="Time configuration"><svg width="16" height="16"><path d="M1 1h10v13H1z" fill="#eee" /><path d="M2 2h7v6H2z" fill="#1d5cab" /><circle cx="11" cy="11" r="4.500" fill="#ddd" stroke="#444" /><path d="M11 8v3h2" fill="none" stroke="#333" /></svg></BareButton>
          </StatusRow>
        </Col>
        <NavGrid>
          <BareButton $w={23} aria-label="Zoom"><S w={20}><circle cx="7" cy="7" r="5" fill="#dfe9ee" stroke="#aaa" /><path d="M10 11l5 6" stroke="#bbb" strokeWidth="3" /><path d="M14 5h5M16.500 2.500v5M14 9.500h5" stroke="#ddd" /></S></BareButton>
          <BareButton $w={23} aria-label="Zoom all"><S w={20}><path d="M3 3h6v6H3zM11 3h6v6h-6zM3 11h6v6H3z" fill="#dfe2e6" /><circle cx="12" cy="12" r="3.500" fill="#eee" stroke="#666" /><path d="M14 14l3 4" stroke="#bbb" strokeWidth="2" /></S></BareButton>
          <BareButton $w={23} aria-label="Zoom extents"><S w={20}><path d="M2 6V2h4M13 2h4v4M2 13v4h4" stroke="#eee" strokeWidth="1.500" /><path d="M6 8l2-2h6v6l-2 2H6z" fill="#7fae6c" stroke="#ddd" /><path d="M18 14v4h-4z" fill="#fff" /></S></BareButton>
          <BareButton $w={23} aria-label="Zoom extents all"><S w={20}><path d="M6 2h6v6H6zM13 2h6v6h-6zM13 9h6v6h-6z" fill="#dfe2e6" /><path d="M3 10l2-2h6v7l-2 2H3z" fill="#7fae6c" stroke="#ddd" /><path d="M19 14v4h-4z" fill="#fff" /></S></BareButton>
          <BareButton $w={23} aria-label="Field of view"><S w={20}><path d="M2 3l14 7-14 7M8 6c2 3 2 5 0 8" stroke="#ccc" strokeWidth="1.500" /><path d="M18 14v4h-4z" fill="#fff" /></S></BareButton>
          <BareButton $w={23} aria-label="Pan"><S w={20}><path d="M6 17L2 10l2-1 2 2-1-8 2-.5 1.500 6L9 2h2v7l1.500-6 2 .5-1 7 2-3 1.500 1-4 9z" fill="#eee" stroke="#555" strokeWidth=".5" /><path d="M18 14v4h-4z" fill="#fff" /></S></BareButton>
          <BareButton $w={23} aria-label="Orbit"><S w={20}><circle cx="9" cy="10" r="5" stroke="#ccc" /><path d="M9 10V7a3.500 3.500 0 013 5z" fill="#7fae6c" /><path d="M9 1v9l5 3M2 17l7-7" stroke="#eee" strokeWidth="1.500" /><path d="M18 14v4h-4z" fill="#fff" /></S></BareButton>
          <BareButton $w={23} aria-label="Maximize viewport"><S w={20}><path d="M3 3h12v12H3z" fill="#e8eaee" /><path d="M5 10V5h5M5 5l8 8" stroke="#222" strokeWidth="1.300" /><path d="M17 8v9H8" stroke="#888" /></S></BareButton>
        </NavGrid>
      </Status>
    </Page>
  );
}
